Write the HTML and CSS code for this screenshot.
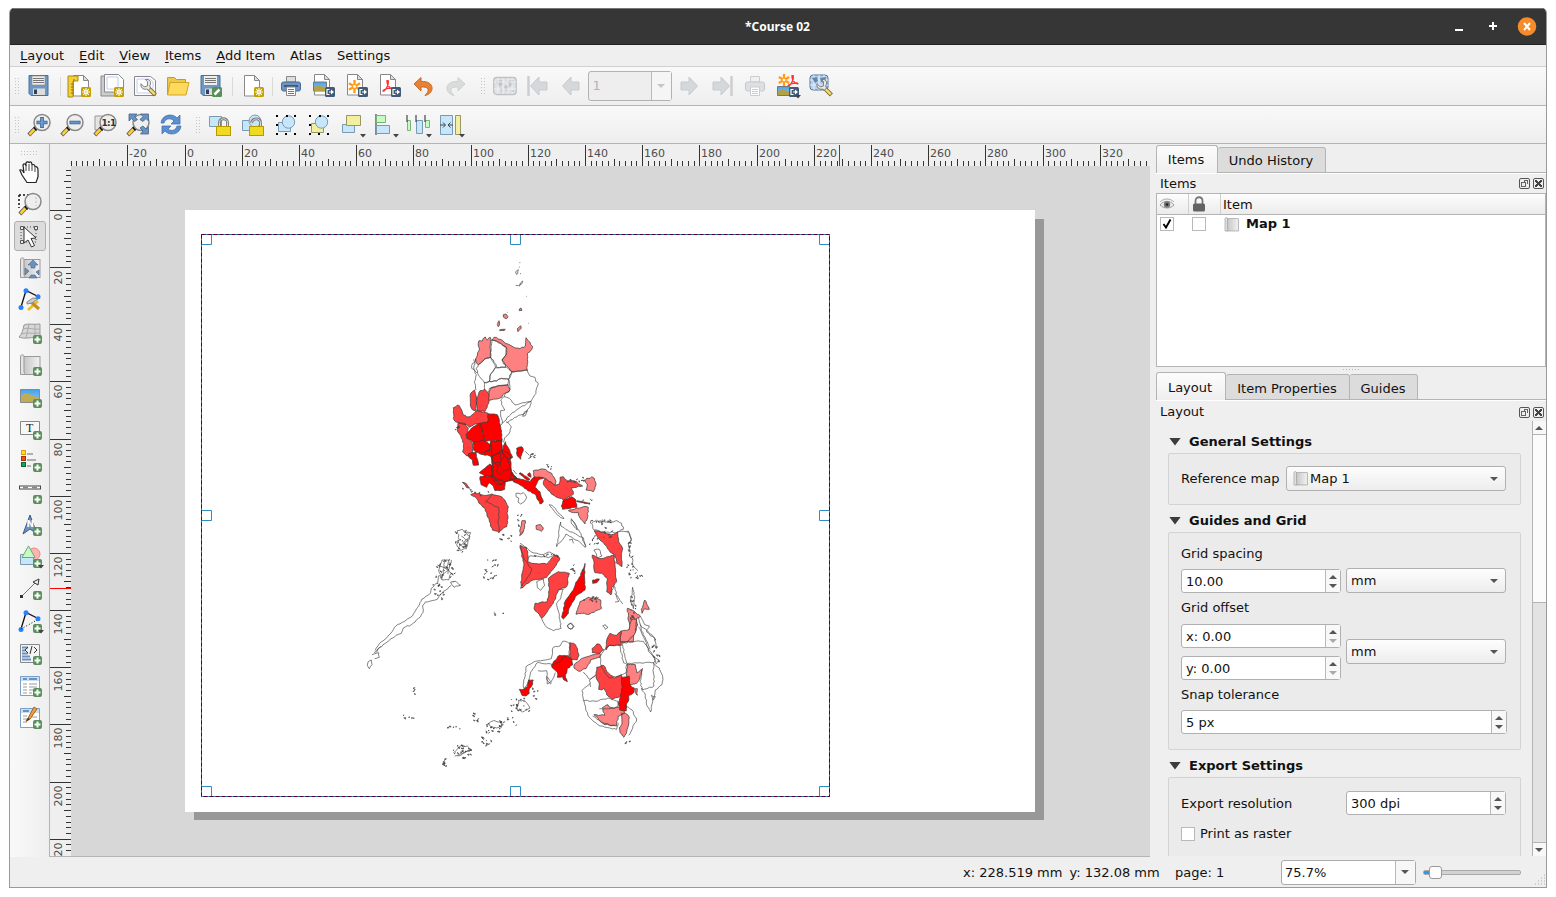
FILE: index.html
```html
<!DOCTYPE html>
<html lang="en">
<head>
<meta charset="utf-8">
<title>*Course 02</title>
<link rel="stylesheet" href="styles.css">
</head>
<body>
<svg class="defs" width="0" height="0">
  <defs>
    <linearGradient id="gray" x1="0" x2="1"><stop offset="0" stop-color="#c4c4c4"/><stop offset="1" stop-color="#f2f2f2"/></linearGradient>
    <linearGradient id="sky" x1="0" y1="0" x2="0" y2="1"><stop offset="0" stop-color="#46a2ea"/><stop offset="1" stop-color="#8fc8f2"/></linearGradient>
    <symbol id="plus" viewBox="0 0 9 9"><rect width="9" height="9" rx="2" fill="#5a8f5a"/><path d="M4.500 1.500v6M1.500 4.500h6" stroke="#fff" stroke-width="2"/></symbol>
    <symbol id="star" viewBox="0 0 10 10"><rect width="10" height="10" rx="1.500" fill="#c4a000"/><path d="M5 1v8M1 5h8M2.200 2.200l5.600 5.600M7.800 2.200L2.200 7.800" stroke="#fff" stroke-width="1.100"/><circle cx="5" cy="5" r="1.200" fill="#c4a000" stroke="#fff"/></symbol>
    <symbol id="export" viewBox="0 0 10 10"><rect width="10" height="10" rx="1.500" fill="#415a75"/><path d="M4.500 2.500H2v5h2.500M4 5h3" stroke="#fff" fill="none" stroke-width="1.200"/><path d="M6 2.500L9 5 6 7.500z" fill="#fff"/></symbol>
    <symbol id="page" viewBox="0 0 24 24"><path d="M4.500 1.500h10l5 5v15.500h-15z" fill="#fff" stroke="#888"/><path d="M14.500 1.500v5h5z" fill="#ddd" stroke="#888"/></symbol>
    <symbol id="burst" viewBox="0 0 12 12"><path d="M6 0v12M.8 3l10.400 6M.8 9l10.400-6" stroke="#ff9c16" stroke-width="2.200"/><circle cx="6" cy="6" r="1.300" fill="#fff"/></symbol>
    <symbol id="acro" viewBox="0 0 12 12"><path d="M1 11c0-2 10-4 10-2.500S5 7 5 1.500 7 1 6 4.500 2 12 1 11z" fill="none" stroke="#f33" stroke-width="1.300"/></symbol>
    <symbol id="glass" viewBox="0 0 24 24"><path d="M9 14.500L1.800 22" stroke="#555" stroke-width="4"/><path d="M8 15.500L2.500 21.500" stroke="#fcce3a" stroke-width="2.600"/><path d="M7 14l3 3" stroke="#111" stroke-width="2.500"/><circle cx="15" cy="9.500" r="8" fill="#eee" stroke="#888" stroke-width="1.500"/></symbol>
    <symbol id="roll" viewBox="0 0 24 24"><rect x="5" y="3.500" width="17" height="18" fill="url(#gray)" stroke="#999"/><path d="M2.500 21.500V4c0-3 4-3 3.500 0v14c0 3 2 3.500-1 3.500z" fill="#e4e4e4" stroke="#999"/></symbol>
    <symbol id="globe" viewBox="0 0 24 24"><rect x=".7" y="3.500" width="22.500" height="17" rx="3" fill="#dfe2e5" stroke="#bfc2c5" stroke-width="1.300"/><path d="M3 7l6-1 1 4-3 3-3-3zM7 13l3 2-2 4zM12 7l9-1-2 6-3 1-1-4zM12 11l4 1-2 6-3-4zM18 16h3v2h-3z" fill="#c2c5c8"/><path d="M5 4v16M10 4v16M15 4v16M19 4v16M1 8h22M1 15h22" stroke="#f2f2f2" stroke-width=".8"/></symbol>
    <symbol id="arrow" viewBox="0 0 24 24"><path d="M3.500 12L12 3v5h8v8h-8v5z" fill="#d5d8db" stroke="#c8cbce"/></symbol>
    <symbol id="shackle" viewBox="0 0 15 19"><path d="M3.500 10V5.500c0-5 8-5 8 0V10" fill="none" stroke="#777" stroke-width="2.800"/><path d="M3.500 10V5.500c0-5 8-5 8 0V10" fill="none" stroke="#ddd"/><rect x=".5" y="9.500" width="14" height="9" fill="#f0da1e" stroke="#b59b00"/></symbol>
    <symbol id="unlocked" viewBox="0 0 15 19"><path d="M2.500 6C3 1 11.500 0 11.500 6V10" fill="none" stroke="#777" stroke-width="2.800"/><path d="M2.500 6C3 1 11.500 0 11.500 6V10" fill="none" stroke="#ddd"/><rect x=".5" y="9.500" width="14" height="9" fill="#f0da1e" stroke="#b59b00"/></symbol>
    <symbol id="nodes" viewBox="0 0 24 24"><path d="M3 19L8 2.500 20 8.500" stroke="#111" stroke-width="1.300" fill="none"/><circle cx="3" cy="19.500" r="2.500" fill="#2b80ff"/><circle cx="8" cy="2.800" r="2.500" fill="#2b80ff"/><circle cx="20" cy="8.700" r="2.500" fill="#2b80ff"/></symbol>
    <symbol id="handles" viewBox="0 0 24 24"><path d="M2 2h2v2H2zM12 2h2v2h-2zM20 2h2v2h-2zM2 11h2v2H2zM20 20h2v2h-2zM11 20h2v2h-2zM2 20h2v2H2z" fill="#000"/></symbol>
    <symbol id="drop" viewBox="0 0 6 4"><path d="M0 0h6L3 3.500z" fill="#444"/></symbol>
    <symbol id="wrench" viewBox="0 0 16 16"><path d="M8 8l6.500 6.500" stroke="#7d6b2a" stroke-width="4"/><path d="M9 9l5 5" stroke="#f6dc77" stroke-width="2.200"/><path d="M1 4l3 3 3-1V2L5 0c5-1 6 4 4 6l1 2-2 2-2-1C3 10 0 7 1 4z" fill="#e8e8e8" stroke="#777" stroke-width=".9"/></symbol>
  </defs>
</svg>

<div class="window">
  <header class="titlebar">
    <span class="title">*Course 02</span>
    <span class="winbtns">
      <svg width="10" height="12"><path d="M1 8h8v2H1z" fill="#fff"/></svg>
      <svg width="10" height="12"><path d="M1 5h8M5 1v8" stroke="#fff" stroke-width="2"/></svg>
      <svg width="20" height="20"><circle cx="10" cy="9.500" r="9.300" fill="#f68b2c"/><path d="M7 6l6 7M13 6l-6 7" stroke="#fff" stroke-width="2"/></svg>
    </span>
  </header>
  <nav class="menubar"><span><u>L</u>ayout</span><span><u>E</u>dit</span><span><u>V</u>iew</span><span><u>I</u>tems</span><span><u>A</u>dd Item</span><span>Atlas</span><span>Settings</span></nav>

  <div class="toolbar">
    <i class="grip"></i>
    <b class="tool"><svg viewBox="0 0 24 24"><path d="M2 1.500h19v20H4l-2-2z" fill="#6d97c4" stroke="#4c7097"/><path d="M5 2h13v9H5z" fill="#eee" stroke="#888" stroke-width=".6"/><path d="M6 4.500h11M6 6.500h11M6 8.500h11" stroke="#777"/><path d="M6 14.500h12V21H6z" fill="#ddd"/><path d="M7 15.500h3V20H7z" fill="#333f55"/></svg></b>
    <i class="sep a"></i>
    <b class="tool"><svg viewBox="0 0 24 24"><use href="#page" x="2" width="24" height="24"/><path d="M1 2h10v5H6v16H1z" fill="#f5cf35" stroke="#a98b14"/><path d="M4 10h2M4 13h2M4 16h2M4 19h2M7 5v2" stroke="#8b7000"/><use href="#star" x="14" y="13" width="10" height="10"/></svg></b>
    <b class="tool"><svg viewBox="0 0 24 24"><path d="M1 2h17v20H1z" fill="#ccc" stroke="#888"/><path d="M4.500.5h14l5 5V18h-19z" fill="#fff" stroke="#888"/><path d="M7 3h11v12H7z" fill="none" stroke="#bcd0f5"/><use href="#star" x="14" y="13" width="10" height="10"/></svg></b>
    <b class="tool"><svg viewBox="0 0 24 24"><path d="M1.500 2.500h16l5 4V21.500h-21z" fill="#fff" stroke="#888"/><path d="M4 5h13l3 3v11H4z" fill="none" stroke="#bcd0f5"/><use href="#wrench" x="7" y="5" width="17" height="18"/></svg></b>
    <b class="tool"><svg viewBox="0 0 24 24"><path d="M1.500 21V3.500h7l2 2h9v4" fill="#eec84a" stroke="#c79d21"/><path d="M4 8.500h19L20 21H1.500z" fill="#fdd95c" stroke="#cfa52a"/></svg></b>
    <b class="tool"><svg viewBox="0 0 24 24"><path d="M2 1.500h19v20H4l-2-2z" fill="#6d97c4" stroke="#4c7097"/><path d="M5 2h13v9H5z" fill="#eee"/><path d="M6 4.500h11M6 6.500h11M6 8.500h11" stroke="#777"/><path d="M6 14.500h12V21H6z" fill="#ddd"/><path d="M7 15.500h3V20H7z" fill="#333f55"/><rect x="13" y="13" width="10" height="10" rx="1.500" fill="#5a8f5a"/><path d="M15.500 20.500l5-5" stroke="#fff" stroke-width="2.500"/></svg></b>
    <i class="sep b"></i>
    <b class="tool"><svg viewBox="0 0 24 24"><use href="#page" x="-1" y="0" width="24" height="24"/><use href="#star" x="13" y="13" width="10" height="10"/></svg></b>
    <i class="sep c"></i>
    <b class="tool"><svg viewBox="0 0 24 24"><path d="M7.500 2.500h9V8h-9z" fill="#dedede" stroke="#888"/><rect x="2.500" y="8" width="19" height="9" rx="2" fill="#6e94bf" stroke="#466b96"/><path d="M5 11h14v2H5z" fill="#395a80"/><path d="M7.500 13h9v8.500h-9z" fill="#fff" stroke="#888"/><path d="M9 15.500h6M9 17.500h6M9 19.500h6" stroke="#777"/></svg></b>
    <b class="tool"><svg viewBox="0 0 24 24"><use href="#page" x="-2" y="-1" width="24" height="24"/><path d="M1.500 8h13v9h-13z" fill="url(#sky)" stroke="#777"/><path d="M2 13l5-2 7 3v3H2z" fill="#b3a147"/><use href="#export" x="13" y="13" width="10" height="10"/></svg></b>
    <b class="tool"><svg viewBox="0 0 24 24"><use href="#page" x="-2" y="-1" width="24" height="24"/><use href="#burst" x="3" y="6" width="13" height="13"/><use href="#export" x="13" y="13" width="10" height="10"/></svg></b>
    <b class="tool"><svg viewBox="0 0 24 24"><use href="#page" x="-2" y="-1" width="24" height="24"/><use href="#acro" x="4" y="6" width="12" height="12"/><use href="#export" x="13" y="13" width="10" height="10"/></svg></b>
    <b class="tool"><svg viewBox="0 0 24 24"><path d="M3 10L10 3.500v4c14-1 14 12 4 14 6-6 3-9-4-8.500V17z" fill="#e78135" stroke="#c96a26"/></svg></b>
    <b class="tool"><svg viewBox="0 0 24 24"><path d="M21 10L14 3.500v4c-14-1-14 12-4 14-6-6-3-9 4-8.500V17z" fill="#dadcdb" stroke="#cfd1d0"/></svg></b>
    <i class="grip mid"></i>
    <b class="tool"><svg viewBox="0 0 24 24"><use href="#globe" width="24" height="24"/></svg></b>
    <b class="tool"><svg viewBox="0 0 24 24"><path d="M2.500 2v20" stroke="#cbced1" stroke-width="2.500"/><use href="#arrow" x="1" width="24" height="24"/></svg></b>
    <b class="tool"><svg viewBox="0 0 24 24"><use href="#arrow" width="24" height="24"/></svg></b>
    <span class="pagebox"><em>1</em><s></s></span>
    <b class="tool flip"><svg viewBox="0 0 24 24"><use href="#arrow" width="24" height="24"/></svg></b>
    <b class="tool flip"><svg viewBox="0 0 24 24"><path d="M2.500 2v20" stroke="#cbced1" stroke-width="2.500"/><use href="#arrow" x="1" width="24" height="24"/></svg></b>
    <b class="tool"><svg viewBox="0 0 24 24"><path d="M7.500 2.500h9V8h-9z" fill="#f1f1f1" stroke="#ccc"/><rect x="2.500" y="8" width="19" height="9" rx="2" fill="#dde0e3" stroke="#c6c9cc"/><path d="M7.500 13h9v8.500h-9z" fill="#fff" stroke="#ccc"/><path d="M9 15.500h6M9 17.500h6M9 19.500h6" stroke="#ccc"/></svg></b>
    <b class="tool"><svg viewBox="0 0 24 24"><use href="#burst" x="2" y="0" width="12" height="12"/><use href="#acro" x="11" y="1" width="12" height="12"/><path d="M1.500 12.500h12v9h-12z" fill="url(#sky)" stroke="#777"/><path d="M2 17l5-2 6 3v3H2z" fill="#b3a147"/><use href="#export" x="13" y="13" width="10" height="10"/><use href="#drop" x="19" y="21" width="6" height="4"/></svg></b>
    <b class="tool"><svg viewBox="0 0 24 24"><rect x="1" y="1" width="18" height="15" rx="3" fill="#b7cfe9" stroke="#54779e"/><path d="M5 1v15M10 1v15M15 1v15M1 6h18M1 11h18" stroke="#e3eefa"/><path d="M3 4l5-1 1 4-3 2zM11 4l6-1-1 6-4-1z" fill="#6387ad"/><use href="#wrench" x="7" y="5" width="17" height="18"/></svg></b>
  </div>

  <div class="toolbar second">
    <i class="grip"></i>
    <b class="tool"><svg viewBox="0 0 24 24"><use href="#glass" width="24" height="24"/><path d="M15 4v11M9.500 9.500h11" stroke="#355f8e" stroke-width="3.600"/><path d="M15 4.700v9.600M10.200 9.500h9.600" stroke="#6a9bd0" stroke-width="2"/></svg></b>
    <b class="tool"><svg viewBox="0 0 24 24"><use href="#glass" width="24" height="24"/><path d="M9.500 9.500h11" stroke="#355f8e" stroke-width="3.600"/><path d="M10.200 9.500h9.600" stroke="#6a9bd0" stroke-width="2"/></svg></b>
    <b class="tool"><svg viewBox="0 0 24 24"><path d="M2 3h8v14H2z" fill="#e4e4e4" stroke="#999"/><use href="#glass" width="24" height="24"/><text x="8.500" y="13" class="ratio">1:1</text></svg></b>
    <b class="tool"><svg viewBox="0 0 24 24"><use href="#glass" width="24" height="24"/><g fill="#6a92c0" stroke="#43658c" stroke-width=".8"><path d="M3 1h8L8.500 3.500l3 3-3 2-3-3L3 8zM22.500 1h-8L17 3.500l-3 3 3 2 3-3L22.500 8zM22.500 21h-8l2.500-3-3-3 3-2 3 3 2.500-2z"/></g></svg></b>
    <b class="tool"><svg viewBox="0 0 24 24"><g fill="#5a8fd0" stroke="#3d6ca5" stroke-width=".7"><path d="M2 10C3 1 14 0 18 5l3-3v9h-9l3-3C11 4 6 6 5 10z"/><path d="M22 13c-1 9-12 10-16 5l-3 3v-8h9l-3 3c4 3 8 1 9-3z"/></g></svg></b>
    <i class="grip mid"></i>
    <b class="tool"><svg viewBox="0 0 24 24"><path d="M1.500 3.500h12v10h-12z" fill="#c8e6fa" stroke="#789bb5"/><use href="#shackle" x="8" y="4" width="15" height="19"/></svg></b>
    <b class="tool"><svg viewBox="0 0 24 24"><path d="M1.500 7.500h10v10h-10z" fill="#c8e6fa" stroke="#789bb5"/><circle cx="14" cy="8" r="6" fill="#c8e6fa" stroke="#789bb5"/><use href="#unlocked" x="8" y="4" width="15" height="19"/></svg></b>
    <b class="tool"><svg viewBox="0 0 24 24"><path d="M4.500 9.500h12v9h-12z" fill="#c8e6fa" stroke="#789bb5"/><circle cx="14.500" cy="9" r="6.200" fill="#c8e6fa" stroke="#789bb5"/><use href="#handles" width="24" height="24"/></svg></b>
    <b class="tool"><svg viewBox="0 0 24 24"><path d="M4.500 10.500h12v9h-12z" fill="#f2f0a0" stroke="#999766"/><circle cx="14.500" cy="9" r="6.200" fill="#c8e6fa" stroke="#789bb5"/><use href="#handles" width="24" height="24"/></svg></b>
    <b class="tool"><svg viewBox="0 0 24 24"><path d="M2.500 11.500h12v8h-12z" fill="#c8e6fa" stroke="#789bb5"/><path d="M6.500 2.500h14v10h-14z" fill="#f2f0a0" stroke="#999766"/><use href="#drop" x="20" y="21" width="6" height="4"/></svg></b>
    <b class="tool"><svg viewBox="0 0 24 24"><path d="M3 1v21" stroke="#222"/><path d="M3.500 2.500h9v7h-9z" fill="#c6fac6" stroke="#76b576"/><path d="M3.500 12.500h13v8h-13z" fill="#c8e6fa" stroke="#789bb5"/><use href="#drop" x="20" y="21" width="6" height="4"/></svg></b>
    <b class="tool"><svg viewBox="0 0 24 24"><path d="M1.500 7.500h3v10h-3z" fill="#c6fac6" stroke="#76b576"/><path d="M10.500 7.500h6v13h-6z" fill="#c8e6fa" stroke="#789bb5"/><path d="M19.500 7.500h4v7h-4z" fill="#c6fac6" stroke="#76b576"/><path d="M1 2v7M10 2v7M19 2v7" stroke="#222"/><use href="#drop" x="20" y="21" width="6" height="4"/></svg></b>
    <b class="tool"><svg viewBox="0 0 24 24"><path d="M1.500 2.500h12v19h-12z" fill="#c8e6fa" stroke="#789bb5"/><path d="M16.500 2.500h5v19h-5z" fill="#f2f0a0" stroke="#999766"/><path d="M1 12h5M4 9.500L6.500 12 4 14.500M14 12H9M11.500 9.500L9 12l2.500 2.500" stroke="#444" fill="none"/><use href="#drop" x="20" y="21" width="6" height="4"/></svg></b>
  </div>

  <main class="workspace">
    <aside class="toolbox">
      <i class="hgrip"></i>
      <b class="tool"><svg viewBox="0 0 24 24"><path d="M9 22.500L4 15 1.800 10c2-1 3.200 1 4.200 3L5 5c1-2 3-1 3 1V3c1-2 3-1 3 0 1-2 3-1 3 2 2-1 3 0 3 2 2-1 3 1 3 3v7l-2 5.500z" fill="#fff" stroke="#222" stroke-width="1.200"/><path d="M8 5v6M11 4v7M14 6v5M17 8v4" stroke="#444"/></svg></b>
      <b class="tool"><svg viewBox="0 0 24 24"><path d="M1 3h12M1 3v13" stroke="#111" stroke-width="1.500" stroke-dasharray="2 2"/><use href="#glass" width="24" height="24"/><path d="M18 5v9" stroke="#bbb" stroke-dasharray="2 2"/></svg></b>
      <b class="tool on"><svg viewBox="0 0 24 24"><path d="M3 3h15v15H3z" fill="none" stroke="#444" stroke-dasharray="1 2"/><path d="M2.500 2.500h3v3h-3zM16.500 2.500h3v3h-3zM2.500 16.500h3v3h-3z" fill="#eee" stroke="#555"/><path d="M6 3l12 11-5 .5 3.500 7-3 1.500-3.500-7L6 19z" fill="#fff" stroke="#333"/></svg></b>
      <b class="tool"><svg viewBox="0 0 24 24"><use href="#roll" width="24" height="24"/><path d="M15 4l5 5h-3v3h-4V9h-3zM7 12l4 3-4 4zM21 14l-3 2 3 3zM13 19h4l2 3h-8z" fill="#6a92c0" stroke="#43658c" stroke-width=".6"/></svg></b>
      <b class="tool"><svg viewBox="0 0 24 24"><use href="#nodes" width="24" height="24"/><path d="M10 22l10-9" stroke="#e8c22a" stroke-width="3"/><path d="M21 21l-8-7" stroke="#c98a1e" stroke-width="3"/><path d="M9 14l6-4 5 1-6 4-5 1z" fill="#ccc" stroke="#888"/></svg></b>
      <b class="tool"><svg viewBox="0 0 24 24"><path d="M6 4c4-2 10 0 16-1v14c-8-2-14 2-21-1C4 13 5 9 6 4z" fill="#d7d7d7" stroke="#999"/><path d="M5 8c5-2 11 1 17 0M3 13c6-2 12 0 19-1M11 3L8 17M17 3v14" stroke="#aaa" fill="none"/><use href="#plus" x="15" y="14" width="9" height="9"/></svg></b>
      <b class="tool"><svg viewBox="0 0 24 24"><use href="#roll" width="24" height="24"/><use href="#plus" x="15" y="14" width="9" height="9"/></svg></b>
      <b class="tool"><svg viewBox="0 0 24 24"><path d="M2.500 4.500h19v13h-19z" fill="url(#sky)" stroke="#888"/><path d="M3 11l5-3 13 5v4H3z" fill="#c0ad51"/><use href="#plus" x="15" y="14" width="9" height="9"/></svg></b>
      <b class="tool"><svg viewBox="0 0 24 24"><path d="M2.500 4.500h19v13h-19z" fill="#f7f7f7" stroke="#888"/><text x="8" y="15" class="tee">T</text><use href="#plus" x="15" y="14" width="9" height="9"/></svg></b>
      <b class="tool"><svg viewBox="0 0 24 24"><rect x="3.500" y="1.500" width="4" height="4" fill="#fcdf27" stroke="#e19a00"/><rect x="3.500" y="7.500" width="4" height="4" fill="#ff4911" stroke="#a6320b"/><rect x="3.500" y="13.500" width="4" height="4" fill="#17a455" stroke="#066b33"/><path d="M9 5h6M9 11h9M9 17h4" stroke="#999" stroke-width="1.500"/><use href="#plus" x="15" y="14" width="9" height="9"/></svg></b>
      <b class="tool"><svg viewBox="0 0 24 24"><rect x="1.500" y="5" width="21" height="3" fill="#fff" stroke="#444"/><path d="M5 6.500h5M14 6.500h5" stroke="#888" stroke-width="2"/><use href="#plus" x="15" y="14" width="9" height="9"/></svg></b>
      <b class="tool"><svg viewBox="0 0 24 24"><path d="M12 2l7 19-7-5-7 5z" fill="#6f94bd" stroke="#365b86"/><text x="8.500" y="14" class="en">N</text><use href="#plus" x="15" y="14" width="9" height="9"/></svg></b>
      <b class="tool"><svg viewBox="0 0 24 24"><circle cx="16" cy="9" r="6" fill="#ffb3b3" stroke="#e38a8a"/><path d="M2.500 9.500h13v10h-13z" fill="#c8e6fa" stroke="#789bb5"/><path d="M10.500 1l6.500 11.500H4z" fill="#c6fac6" stroke="#70a870"/><use href="#plus" x="15" y="14" width="9" height="9"/><use href="#drop" x="20" y="20" width="6" height="4"/></svg></b>
      <b class="tool"><svg viewBox="0 0 24 24"><path d="M3 20L19 4" stroke="#777"/><path d="M15 5l6-3-1 6z" fill="#eee" stroke="#333"/><path d="M2 18h3v3H2z" fill="#333"/><use href="#plus" x="15" y="14" width="9" height="9"/></svg></b>
      <b class="tool"><svg viewBox="0 0 24 24"><use href="#nodes" width="24" height="24"/><path d="M3 19l16-9" stroke="#111" stroke-dasharray="1 2"/><use href="#plus" x="15" y="14" width="9" height="9"/><use href="#drop" x="20" y="20" width="6" height="4"/></svg></b>
      <b class="tool"><svg viewBox="0 0 24 24"><path d="M2.500 2.500h19v18h-19z" fill="#f3f3f3" stroke="#888"/><path d="M4 5.500h6M4 8.500h3M4 11.500h6M4 14.500h8M4 17.500h9" stroke="#6a92c0" stroke-width="1.800"/><path d="M10 5L7 8l3 3M16 5l3 3-3 3M14 4l-2 8" fill="none" stroke="#333"/><use href="#plus" x="15" y="14" width="9" height="9"/></svg></b>
      <b class="tool"><svg viewBox="0 0 24 24"><path d="M2.500 2.500h19v19h-19z" fill="#fff" stroke="#7ba0c9"/><path d="M3 3h18v4H3z" fill="#c8def2"/><path d="M5 5h4M11 5h8" stroke="#6a92c0" stroke-width="2"/><path d="M5 10h4M11 10h8M5 13h4M11 13h8M5 16h4M11 16h5M5 19h4M11 19h3" stroke="#999"/><use href="#plus" x="15" y="14" width="9" height="9"/></svg></b>
      <b class="tool"><svg viewBox="0 0 24 24"><path d="M2.500 2.500h19v19h-19z" fill="#fff" stroke="#7ba0c9"/><path d="M3 3h18v4H3z" fill="#c8def2"/><path d="M5 5h6" stroke="#6a92c0" stroke-width="2"/><path d="M5 10h4M5 13h4M5 16h4M13 11h6" stroke="#999"/><path d="M10 12L16 1l3 2-7 10-4 2z" fill="#ea9d44" stroke="#a96518"/><path d="M10 12l2 1-4 3z" fill="#333"/><use href="#plus" x="15" y="14" width="9" height="9"/></svg></b>
    </aside>

    <section class="canvas">
      <svg id="rulers" class="rulers" width="1100" height="713" viewBox="50 144 1100 713">
        <path d="M50 144h1100v22H71v691H50z" fill="#efefef"/>
        <path d="M71 166h1079v690H71z" fill="#d7d7d7"/>
        <path d="M50 856.500h1100" stroke="#b4b4b4"/>
        <path d="M194 219h850v601H194z" fill="#989898"/>
        <path d="M185 210h850v602H185z" fill="#fff"/>
        <g class="land" transform="translate(430 240) scale(.33333)">
          <path class="l" d="M147 302l10 1 3-8 6-4 6 9 9-8 1 60-14 3-10 9-13 10-5-4-3-14 5-10 6-16-3-12zM185 300l7-8 18 6 12 8 18 9 15 9 15 2 16-8 1-10 1-15 6 8 6 6 8 13-8 15-8 5 0 18 0 33-46 4-14-15-8-8-8-12 12-15 1-23-12-8-17-10zM183 443l22-5 29-4 6 14-4 8-16 6-5 10-10 4-29 5 0-19zM220 224l8-2 6 8-4 6-10-5zM268 207l5-3 3 7-8 1zM205 245l2-3 2 8-4 10-3-6zM208 270l8-2 10 0-4 4-12 0zM262 266l10-9 2 8-10 10z"/>
          <path class="n" d="M185 300l15 4 29 18-1 23-12 15 12 22-28 0-10-22-8-8zM145 374l23-19 14-3 10 18 4 13-14 19-4 22-15 4-18-23-7-20zM196 383l32-3 18 15-10 23-21-3-15 8-22 1 4-22zM163 428l37-5 15-8 21 3-2 16-34 4-22 7-2 11-13-1zM246 395l46-4 8 17 15 4 2 12 8 8-4 10-3 18-15 24-18 4-30 7-17-20-16-5 18-22-4-30zM137 356l-3 12-6 2-3 15 7 4 3 11 4 4-6 21 5 25M131 358l4 14-4 12 10 15M222 470l-10 10 3 14 10 16-13 2 0 16 5 22M212 556l35-38 56-34-4 18-14 18-20 6-24 14-9 8-4-2M232 545l12 16-6 18-10 10-8 18M284 515l8-3-6 15-8 2zM257 95l8-6-2 12-4 2zM268 80v3M268 68h3M257 136l12 2 2-9 7-6-2 8-8 4M289 169h2M294 250h2M231 217h2M270 101h3"/>
          <path class="m" d="M122 460l12-10 6 25-3 37-9-2-7-15zM150 452l15-4 11 12 0 30-11 24-25-2 0-37zM70 503l8-3 4-5 6 2 7 13 5 15 10 6 10-1 17-16 28 2 10 4-1 25-14 10-25-3-17 10-6-7-27-7-9-3-6-10zM85 548l20 2 10 15-7 25 17 15 5 35-20 8-12-13 3-10-3-25-15-25z"/>
          <path class="h" d="M174 523l18-1 10 2 6 16 4 20 4 25-1 20-25-3-26 2-6-29-8-25 24-5zM150 550l8 25 6 27-34 6-20-13-1-12 15-18 11-7z"/>
        </g>
        <g class="land" transform="translate(430 400) scale(.33333)">
          <path class="h" d="M182 125l34-3 0 28 24 15 5 50 15 20-20 5-35 15-20-20 1-65zM130 128l30-8 22 15-2 15-30 12-20-12zM182 125l33-3 1 28-11 10-20 10-33-8 30-12zM226 125l10 20 12 27-8 6-15-8-9-20zM115 162l23-6 8 39-16 1-2-16-13-10zM185 170l30-15 17 23 10 27 3 20 15 10-50 17-20-22-4-30zM148 218l12-10 20-16 10 8 0 30-25-2zM150 230l35-4 20 12 21 7-2 23-14 4-15 0-5-14-12-10-8 14-17-8zM245 218l15 17 40 10 18-20 27 7-20 8-10 22 15 13 4 16 6 14-10 7-7-12-5-15-28-17-28-18-22-12zM260 145l15-5 5 10-4 10-4 18-10-10zM270 218l30 20-4 3-28-19zM293 222l6-4 4 14-9-5zM400 300l25-10 13 10 2 22-42 6-4-10zM442 302l38 7-2 3-38-7z"/>
          <path class="n" d="M185 170l8 18 10 12 8-10 10-20M203 200l-4 14 12 10 12-12 20-4M190 190l20-4M212 160l0 40M182 170l10 12M190 240l30 0"/>
          <path class="m" d="M122 284l12-4 36 6 15-4 30 8 20 30-4 20 3 15-4 25-10 5-13 13-4-4-16-4-22-65-18-15-7-15zM345 235l30 20 13-3 2-20 10-2 12 12 28 3 18 13-33 5 5 20-30 17-20-8-25-20-15-20zM97 247l12 4 10 14-10-3z"/>
          <path class="l" d="M310 212l8-2 22-3 25 13 13 25-3 10-30-20-33-5zM470 235l10 0 5-5 8 5 5 15-3 12-5 13-22-5 4-16-7-9zM415 332l45-12 15 2-3 33-7 17-17-22-3-12-22-2zM276 362l10 0-2 20-8 20-7 5 2-22zM318 377l14-3 8 10-6 10-15-6z"/>
          <path class="n" d="M187 284l-20 21 39 18v75M258 280l14 2 8-4 10 14-8 14-10 6-8-6 2-12-8-4zM485 370l15-10 4 4 46 2 8-4 17 8 5 18-20 10-40-3-28-5zM358 314l8 2 22 26 14 14-10-3-18-18zM424 356l14 20 4 14-8-8-10-12zM392 366l-12 74 28-38 36 20 22 20-5-28-54-26-14-10zM590 395l10 8 4 18-8 8M250 210l10 12M286 154l12 12"/>
        </g>
        <g class="land" transform="translate(350 500) scale(.33333)">
          <path class="m" d="M733 92l27 5 10 4 20 2 13-8 3 30 12 20-4 20 2 35-16-10-5-25-14-8-16-22-20-20zM727 165l8 3 10 7 15 0 32-10 5 50 3 30-15 17-2 23-13-10 2-40-17-15-20-2zM510 136l20 7 3 20 0 22 12 5 45 2 20-22 10-5 10 10-15 25-25 32-40 8-38 25 3-40 7-30-8-40zM595 235l30-20 33 5-8 40-25 10-15 40-35 45-23-30 3-15 37-5 6-35z"/>
          <path class="h" d="M705 190l-2 35 2 45-15 10-14 10-16 30-5 20-15 17-5-5 6-20 4-27 25-35 12-28 10-15zM728 240l20-3-8 11-12 2z"/>
          <path class="l" d="M690 305l25-13 20 2 17 6 3 25-35 17-25-2-17 3 7-23zM832 325l20 8 20 16-14 8 5 18-10 25-3 25-36 2 3-28 15 0 8-20-4-16zM884 300l8 16 6 12-14-2-8 14-2-12z"/>
          <path class="n" d="M806 95l29-2 4 14 6 11-10 12 4 20 0 20 8 4 3 26 14 12M510 130l24 18 10 8 30 8 24-8 26 14M533 185l4-16 20-2 38 6 20-8M512 138l10 38 24 34-30 48M625 270l15-2-10 30-10 12 4 20 6 30 3 25-23 7-20-10-15-27M560 245l20-8 4 20-12 14-10-8zM732 150l16-2 8 20-12 6zM780 278l12-20 10 30 16 24M795 280l12 24-12 2M848 262l6 30-4 34-8-20zM872 350l12 24 14 4-8 18 24 20 4 22M866 352l8 40 18 34 8 22M652 377l12-8 8 10-6 8-10-2zM758 378l8-4 8 8-8 6zM666 60l20 30 22 50M657 120l10-2 4 12"/>
          <path class="n" d="M268 225l-4 20-20 20-6 18-22 14-8 18-12 18-8 14-20 14-24 12-14 16-18 22-24 20-12 20M304 256l-24 18-10 10-8 14-36 8-8 10 2 14-8 20-28 24-24 10-6 16-20 10-28 20-22 16-6 12M322 92l14-4 8 10 18 0-4 20-14 10 4 16-16 8-12-18 8-14zM334 108l20 14-6 26M342 92l18 18-34 30M320 124l24 18M276 180l20 0-6 22 14 18-8 20-20 0-10-30zM262 195l34 14-24 20M284 178l-8 60M304 180l-10 42M302 246l16-2 14 12-20 6z"/>
        </g>
        <g class="land" transform="translate(350 620) scale(.33333)">
          <path class="h" d="M604 136l25-30 30 4 6 10 3 15-16 10-2 14-4 6 6 20-10-5-4-10-16 2 0-16-15-12zM508 208l14 0 10-8 4-20 14 0-2 12-10 14 0 14-10 8-12-2z"/>
          <path class="m" d="M659 68l12 2 8 10 8 26-6 14-16 0-6-14zM726 86l14-14 8 0 13 18-12 10-22-2zM770 60l10-20 20 6 14-14 0 44-36 0-10 14zM740 142l20-6 16 24 18 14 20-10 4 18 4 38-16 12-20 6-16-14-8-20-6 6-10-2 2-16-10-20z"/>
          <path class="l" d="M672 136l22-20 30-10 26-6 0 12-28 8-14 26-22 8-14-10zM814 34l24-6 6-28 16-2-2 24-4 20-20 22-22 2zM832 132l24 2 4 24 16-10-6 26-10 16-24 6-6-28zM758 262l16-8 8 8 38 2 4 14-20 12-4 28-40-6-28-28 32 2zM814 280l12 0 12 12-2 20-6 24-8 16-12-14-2-14 8-12zM856 206l6 0 0 20-6-8z"/>
          <path class="h" d="M815 172l22-4 4 28 12 8-2 14-14 8-2 18-6 8 0 20-20-2-4-22 10-32z"/>
          <path class="n" d="M520 200l8-60 14-8 14-8 30-4 18-4 6-34 20-4 8-14 14 2 8 6-2 34-18 4-10 16-22 8-46-6-20 28-6 30-14 20zM564 152l26 0 0 26 12 14 14-34M590 170l12 14-10 8zM750 110l14-22 14-12 32 0 10 52 10 6-2 24-24 10-26 6-14-16-10-20zM816 70l40-6 24 0 34 52-2 12-82 2zM865 20l20 40 10 34 18 16 4 20M870 14l40 35 6 12M912 110l14 10-8 12M910 128l2 70-34 12-8-26 8-40M912 130l16 14 10 26-2 24-20 16-8 34-6 32-12-20-4-30-12-22M904 226l12 4-6 10zM720 190l-24 22 4 30 40 2 34-10 30 10 0 16-24 6-32 0M702 242l6 30 10 20 32 26 50 10 4-20M822 256l24 14 14 30-24 46M700 156l20 22 18-14M738 165l-20 16 4 20M728 288l30 20 38 10M506 240l20 4 14 20-22 12-18-10zM416 310l14-8 18 4 12 8-20 10-18-4zM310 398l22-20 20 0 12 12-30 10-20 8M322 408l38-16M652 18l10-8 8 8-8 10zM54 126l10-6 2 14-8 12-6-10zM66 104l20-6 2 14-14 4M92 80l-20 18"/>
        </g>
        <g id="islets" class="islets"></g>
        <g fill="#fff" stroke="#328ac4"><path d="M201.500 234.500h10v10h-10zM510.500 234.500h10v10h-10zM819.500 234.500h10v10h-10zM201.500 510.500h10v10h-10zM819.500 510.500h10v10h-10zM201.500 786.500h10v10h-10zM510.500 786.500h10v10h-10zM819.500 786.500h10v10h-10z"/></g>
        <g fill="none">
          <path d="M201.500 234.500h628v562h-628z" stroke="#2f86bd"/>
          <path d="M201.500 234.500h628v562h-628z" stroke="#520030" stroke-dasharray="4 2"/>
        </g>
      </svg>
    </section>

    <aside class="docks">
      <div class="tabs"><span class="tab on t1">Items</span><span class="tab t2">Undo History</span></div>
      <div class="docktitle">Items<span class="dockbtns"><i class="float"></i><i class="close"></i></span></div>
      <div class="tree">
        <div class="treehead">
          <span class="col eye"><svg width="16" height="12"><path d="M1 7c4-5 10-5 14 0-4 4-10 4-14 0z" fill="#eee" stroke="#999"/><circle cx="8" cy="6.500" r="3.200" fill="#777"/><circle cx="8" cy="6.500" r="1.300" fill="#222"/><path d="M1 4c4-4 10-4 14 0" fill="none" stroke="#aaa"/></svg></span>
          <span class="col"><svg width="14" height="16"><path d="M3.500 8V5c0-5 7-5 7 0v3" fill="none" stroke="#777" stroke-width="1.800"/><rect x="1" y="7.500" width="12" height="8" rx="1.500" fill="#636363"/></svg></span>
          <span class="name">Item</span>
        </div>
        <div class="treerow">
          <span class="check"><svg width="12" height="12"><path d="M2.500 6L5 9.500 9.500 1.500" fill="none" stroke="#000" stroke-width="1.900"/></svg></span>
          <span class="check"></span>
          <svg class="mini" viewBox="1 1 22 22"><use href="#roll" width="24" height="24"/></svg>
          <strong>Map 1</strong>
        </div>
      </div>
      <div class="splitter"><i></i></div>
      <div class="tabs lower"><span class="tab on t3">Layout</span><span class="tab t4">Item Properties</span><span class="tab t5">Guides</span></div>
      <div class="docktitle low">Layout<span class="dockbtns"><i class="float"></i><i class="close"></i></span></div>
      <div class="scroll">
        <div class="form">
          <h3 class="first">General Settings</h3>
          <div class="box general"><label>Reference map</label><span class="combo wide"><svg class="mini" viewBox="1 1 22 22"><use href="#roll" width="24" height="24"/></svg>Map 1</span></div>
          <h3>Guides and Grid</h3>
          <div class="box grid">
            <label>Grid spacing</label>
            <div class="row spacing"><span class="spin">10.00<i></i></span><span class="combo">mm</span></div>
            <label>Grid offset</label>
            <div class="row offset"><div class="stack"><span class="spin zero">x: 0.00<i></i></span><span class="spin zero">y: 0.00<i></i></span></div><span class="combo">mm</span></div>
            <label>Snap tolerance</label>
            <span class="spin full">5 px<i></i></span>
          </div>
          <h3>Export Settings</h3>
          <div class="box export">
            <div class="row"><label>Export resolution</label><span class="spin">300 dpi<i></i></span></div>
            <div class="option"><span class="check"></span>Print as raster</div>
            <div class="option"><span class="check"></span></div>
          </div>
        </div>
        <div class="scrollbar"><i class="up"></i><b></b><i class="down"></i></div>
      </div>
    </aside>
  </main>

  <footer class="status">
    <span class="coords"><span>x: 228.519 mm</span><span>y: 132.08 mm</span></span>
    <span class="pageno">page: 1</span>
    <span class="zoombox"><em>75.7%</em><s></s></span>
    <span class="slider"><i></i></span>
    <svg class="sizegrip" width="12" height="12"><path d="M1 11h1M4 11h1M7 11h1M10 11h1M4 8h1M7 8h1M10 8h1M7 5h1M10 5h1M10 2h1" stroke="#aaa"/></svg>
  </footer>
</div>
<script src="rulers.js"></script>
</body>
</html>
```
FILE: styles.css
```css
* { box-sizing: border-box; }
body { margin: 0; background: #fff; font: 13px/18px "DejaVu Sans", sans-serif; color: #111; overflow: hidden; }
.defs { position: absolute; }
.window { margin: 8px 0 0 9px; width: 1538px; height: 880px; border: 1px solid #999; border-top: 0; border-radius: 5px 5px 0 0; background: #efefef; overflow: hidden; }
.titlebar { height: 37px; background: #363636; border-top: 1px solid #777; border-bottom: 1px solid #222; display: grid; grid-template-columns: 91px 1fr 92px; align-items: center; color: #fff; font: bold 12px/18px "Noto Sans", sans-serif; }
.title { grid-column: 2; text-align: center; }
.winbtns { display: flex; align-items: center; gap: 24px; }
.winbtns svg:last-child { margin-left: -5px; }
.winbtns svg { flex: none; }
.menubar { height: 22px; border-bottom: 1px solid #d0d0d0; padding: 2px 0 0 10px; display: flex; gap: 14.900px; }
.menubar u { text-underline-offset: 2px; }

.toolbar { height: 39px; border-bottom: 1px solid #b4b4b4; background: linear-gradient(#f9f9f9, #eee); display: flex; align-items: center; }
.toolbar.second { height: 38px; }
.tool { flex: none; width: 33px; height: 32px; display: flex; align-items: center; justify-content: center; }
.tool svg { width: 24px; height: 24px; overflow: visible; }
.flip svg { transform: scaleX(-1); }
.grip { flex: none; width: 12.500px; height: 18px; background-image: linear-gradient(#c4c4c4 1px, transparent 1px), linear-gradient(#c4c4c4 1px, transparent 1px); background-position: 5px 1px, 8px 1px; background-size: 1px 3px; background-repeat: repeat-y; }
.grip.mid { width: 16px; background-position: 8px 1px, 11px 1px; }
.hgrip { width: 17px; height: 5px; background: conic-gradient(from 0deg at 1px 1px, transparent 75%, #c0c0c0 0) 0 0 / 3px 3px; }
.sep { flex: none; height: 19px; border-left: 1px solid #d9d9d9; }
.sep.a { width: 3px; margin-left: 4px; }
.sep.b { width: 5px; margin-left: 4px; }
.sep.c { width: 3px; margin-left: 2px; }
.pagebox { flex: none; display: flex; width: 84px; height: 30px; margin: 0 1px 0 0; border: 1px solid #b3b3b3; border-radius: 3px; color: #b4b4b4; background: #eee; }
.pagebox em { flex: 1; font-style: normal; padding: 5px 4px; }
.pagebox s { width: 20px; border-left: 1px solid #b9b9b9; background: #f5f5f5; display: flex; align-items: center; justify-content: center; }
.pagebox s::after { content: ""; border: 4px solid transparent; border-top-color: #c5c5c5; border-bottom: 0; }
.ratio { font: bold 9px "DejaVu Sans", sans-serif; letter-spacing: -.7px; fill: #333; }
.tee { font: 12px "Liberation Serif", serif; fill: #222; }
.en { font: bold 9px "DejaVu Sans", sans-serif; fill: #fff; }

.workspace { height: 713px; display: grid; grid-template-columns: 40px 1100px 6px 390px; }
.toolbox { background: linear-gradient(90deg, #f9f9f9, #eee); border-right: 1px solid #b4b4b4; display: flex; flex-direction: column; align-items: center; padding-top: 7px; }
.toolbox .tool { height: 32.120px; }
.toolbox .tool.on { width: 32px; height: 30.120px; margin: 1px 0; background: #dcdcdc; border: 1px solid #b0b0b0; border-radius: 3px; }
.rulers { display: block; }
.tick { stroke: #333; }
.label { font: 11px "DejaVu Sans", sans-serif; fill: #4d4d4d; }
.mark { stroke: #f00; }
.land { stroke: #3a3a3a; stroke-width: 2.200; stroke-linejoin: round; }
.land .n { fill: none; stroke-width: 1.900; }
.land .l { fill: #ff8080; }
.land .m { fill: #ff4040; }
.land .h { fill: #f00; }
.islets { stroke: #444; stroke-width: .8; fill: none; }

.docks { grid-column: 4; display: flex; flex-direction: column; min-height: 0; overflow: hidden; }
.tabs { height: 30px; flex: none; display: flex; align-items: flex-end; border-bottom: 1px solid #fff; box-shadow: inset 0 -1px #b4b4b4; }
.tab { height: 26px; border: 1px solid #b4b4b4; border-left: 0; background: #dcdcdc; display: flex; align-items: center; justify-content: center; border-radius: 3px 3px 0 0; padding: 1px 1px 0 0; }
.tab.on { height: 28px; background: linear-gradient(#fcfcfc, #efefef); border-left: 1px solid #b4b4b4; border-bottom: 0; padding: 1px 2px 0 0; }
.t1 { width: 62px; } .t2 { width: 108px; } .t3 { width: 70px; } .t4 { width: 124px; } .t5 { width: 68px; }
.lower { height: 29px; }
.lower .tab { padding-top: 3px; }
.lower .tab.on { padding-top: 3px; }
.docktitle { flex: none; height: 19px; padding: 0 2px 0 4px; display: flex; justify-content: space-between; align-items: center; }
.docktitle.low { height: 20px; padding-top: 2px; }
.dockbtns { display: flex; gap: 3px; }
.dockbtns i { width: 11px; height: 11px; border: 1px solid #555; border-radius: 2px; }
.dockbtns .float { background: linear-gradient(#666, #666) 4px 1px / 4px 1px, linear-gradient(#666, #666) 7px 1px / 1px 4px, linear-gradient(#666, #666) 4px 1px / 1px 2px, linear-gradient(#666, #666) 1px 3px / 1px 5px, linear-gradient(#666, #666) 5px 3px / 1px 5px, linear-gradient(#666, #666) 1px 3px / 5px 1px, linear-gradient(#666, #666) 1px 7px / 5px 1px; background-repeat: no-repeat; }
.dockbtns .close { background: linear-gradient(45deg, transparent 40%, #444 42% 58%, transparent 60%) center / 7px 7px no-repeat, linear-gradient(-45deg, transparent 40%, #444 42% 58%, transparent 60%) center / 7px 7px no-repeat; }
.tree { flex: none; height: 174px; border: 1px solid #b4b4b4; background: #fff; }
.treehead { height: 21px; background: linear-gradient(#fdfdfd, #ebebeb); border-bottom: 1px solid #b4b4b4; display: flex; }
.col { width: 32px; border-right: 1px solid #cfcfcf; padding-left: 3px; display: flex; align-items: center; }
.col.eye { padding-left: 2px; }
.name { padding: 2px 2px; }
.treerow { display: flex; align-items: center; height: 18px; padding-left: 3px; }
.check { flex: none; width: 14px; height: 14px; border: 1px solid #b9b9b9; background: #fff; margin-right: 18px; }
.check svg { display: block; }
.mini { width: 15px; height: 15px; margin-right: 7px; }
.splitter { height: 5px; flex: none; display: flex; justify-content: center; }
.splitter i { width: 17px; height: 1px; margin-top: 2px; background: repeating-linear-gradient(90deg, #b8b8b8 0 1px, transparent 1px 3px); }
.scroll { flex: none; height: 435px; display: flex; overflow: hidden; }
.form { width: 376px; padding: 9px 12px 0 12px; }
h3 { margin: 4px 0 0; height: 23px; font-size: 13px; line-height: 23px; display: flex; align-items: center; gap: 8px; }
h3.first { margin: 0; }
h3::before { content: ""; width: 12px; height: 8px; margin-left: 1px; background: #3c3c3c; clip-path: polygon(0 0, 100% 0, 50% 100%); }
.box { width: 353px; border: 1px solid #d3d3d3; background: #ebebeb; padding: 0 14px 0 12px; border-radius: 2px; }
.general { height: 52px; padding-bottom: 1px; display: flex; align-items: center; justify-content: space-between; }
.grid { height: 218px; padding-top: 12px; }
.grid label { display: block; height: 18px; }
.row { display: flex; justify-content: space-between; align-items: center; }
.row.spacing { height: 25px; margin: 5px 0 6px; }
.row.offset { height: 56px; margin: 7px 0 6px; }
.row.offset .combo { margin-top: -1px; }
.stack { display: flex; flex-direction: column; gap: 8px; }
.combo, .spin { display: flex; align-items: center; width: 160px; height: 25px; border: 1px solid #b0b0b0; border-radius: 3px; padding-left: 4px; background: linear-gradient(#fdfdfd, #ededed); }
.combo::after { content: ""; margin: 0 7px 0 auto; border: 4px solid transparent; border-top-color: #555; border-bottom: 0; }
.combo.wide { width: 220px; padding-left: 6px; }
.combo .mini { margin-right: 2px; }
.spin { height: 24px; background: #fff; justify-content: space-between; padding-top: 1px; }
.row.spacing .spin { margin-top: 1px; }
.spin.full { width: 326px; margin-top: 6px; }
.spin i { width: 15px; height: 22px; margin-top: -1px; padding-right: 1px; border-left: 1px solid #b9b9b9; background: #f8f8f8; display: flex; flex-direction: column; align-items: center; justify-content: center; gap: 5px; }
.spin i::before { content: ""; border: 4px solid transparent; border-bottom-color: #555; border-top: 0; }
.spin i::after { content: ""; border: 4px solid transparent; border-top-color: #555; border-bottom: 0; }
.spin.zero i::after { border-top-color: #aaa; }
.export { height: 150px; padding-top: 13px; }
.export label { padding-top: 1px; }
.option { display: flex; align-items: center; height: 18px; margin-top: 10px; }
.option + .option { margin-top: 11px; }
.option .check { margin-right: 5px; }
.scrollbar { width: 14px; border-left: 1px solid #b4b4b4; background: #e3e3e3; display: flex; flex-direction: column; }
.scrollbar i { width: 13px; height: 14px; background: #f8f8f8; border-bottom: 1px solid #b4b4b4; display: flex; align-items: center; justify-content: center; padding-right: 1px; }
.scrollbar b { height: 168px; background: #fbfbfb; border-bottom: 1px solid #b4b4b4; }
.scrollbar .up::before { content: ""; border: 4px solid transparent; border-bottom-color: #555; border-top: 0; }
.scrollbar .down { margin-top: auto; border: 0; border-top: 1px solid #b4b4b4; }
.scrollbar .down::before { content: ""; border: 4px solid transparent; border-top-color: #555; border-bottom: 0; }

.status { height: 30px; display: flex; align-items: center; padding-left: 953px; }
.coords { width: 212px; white-space: nowrap; display: flex; gap: 7px; padding-top: 1px; }
.pageno { width: 106px; padding-top: 1px; }
.zoombox { display: flex; width: 135px; height: 25px; border: 1px solid #aaa; border-radius: 3px; background: #fff; }
.zoombox em { flex: 1; font-style: normal; padding: 3px; }
.zoombox s { width: 20px; padding-right: 1px; border-left: 1px solid #b9b9b9; background: #f7f7f7; display: flex; align-items: center; justify-content: center; }
.zoombox s::after { content: ""; border: 4px solid transparent; border-top-color: #555; border-bottom: 0; }
.slider { width: 98px; height: 5px; margin-left: 7px; border: 1px solid #aaa; border-radius: 2px; background: linear-gradient(90deg, #3498db 8px, #d2d2d2 8px); display: flex; align-items: center; }
.slider i { width: 13px; height: 13px; margin-left: 5px; flex: none; border: 1px solid #999; border-radius: 3px; background: #fcfcfc; }
.sizegrip { margin: 14px 0 0 13px; }
```
FILE: rulers.js
```js
const svg = document.getElementById('rulers');
const NS = 'http://www.w3.org/2000/svg';
const add = (parent, tag, attrs, text) => {
  const el = document.createElementNS(NS, tag);
  for (const k in attrs) el.setAttribute(k, attrs[k]);
  if (text !== undefined) el.textContent = text;
  parent.appendChild(el);
};

// Horizontal ruler: one tick every 2 mm, numbered every 20 mm
let d = '';
for (let v = -40; v <= 336; v += 2) {
  const x = Math.floor(185 + v * 2.8605) + 0.5;
  const major = v % 20 === 0 && v > -40;
  const top = major ? 145 : v % 10 === 0 && v > -40 ? 159 : 161;
  d += `M${Math.max(x, 71.5)} ${top}V166`;
  if (major) add(svg, 'text', { class: 'label', x: x + 1.5, y: 157 }, v);
}
// Vertical ruler
for (let v = -14; v <= 224; v += 2) {
  const y = Math.floor(210.3 + v * 2.859) + 0.5;
  const major = v % 20 === 0;
  d += `M${major ? 50 : v % 10 === 0 ? 64 : 66} ${y}H71`;
  if (major) add(svg, 'text', { class: 'label', 'text-anchor': 'end', transform: `translate(62 ${y + 3}) rotate(-90)` }, v < 220 ? v : 20);
}
add(svg, 'path', { class: 'tick', d });
add(svg, 'path', { class: 'mark', d: 'M839.5 145V166M50 588.5H71' });

let seed = 11;
const rnd = () => (seed = seed * 16807 % 2147483647) / 2147483647;

// Break long coast and border segments into short uneven ones
function roughen(src) {
  const tokens = src.match(/[MlhvzHV]|-?\d*\.?\d+/g);
  let out = '', cmd = 'M', x = 0, y = 0, sx = 0, sy = 0, i = 0;
  const lineTo = (nx, ny) => {
    const len = Math.hypot(nx - x, ny - y);
    const n = Math.max(1, Math.round(len / 7));
    for (let k = 1; k < n; k++) {
      const t = k / n;
      out += `L${(x + (nx - x) * t + (rnd() - 0.5) * 3.6).toFixed(1)} ${(y + (ny - y) * t + (rnd() - 0.5) * 3.6).toFixed(1)}`;
    }
    out += `L${nx} ${ny}`;
    x = nx; y = ny;
  };
  while (i < tokens.length) {
    if (/[A-Za-z]/.test(tokens[i])) cmd = tokens[i++];
    if (cmd === 'M') {
      x = sx = +tokens[i++]; y = sy = +tokens[i++];
      out += `M${x} ${y}`;
    } else if (cmd === 'l') {
      const nx = x + +tokens[i++], ny = y + +tokens[i++];
      lineTo(nx, ny);
    } else if (cmd === 'h') lineTo(x + +tokens[i++], y);
    else if (cmd === 'v') lineTo(x, y + +tokens[i++]);
    else if (cmd === 'z') { lineTo(sx, sy); out += 'Z'; }
  }
  return out;
}
for (const p of document.querySelectorAll('.land path')) p.setAttribute('d', roughen(p.getAttribute('d')));

// Clusters of small islets: x, y, half width, half height, count
const clusters = [
  [463, 541, 8, 11, 20], [445, 571, 9, 13, 24], [438, 590, 7, 8, 12], [490, 569, 8, 11, 18],
  [498, 613, 5, 2, 4], [462, 752, 10, 7, 24], [444, 762, 2, 5, 9], [486, 741, 6, 4, 10],
  [508, 722, 9, 5, 14], [519, 705, 11, 7, 18], [478, 716, 6, 5, 8], [455, 728, 8, 2, 5],
  [493, 728, 8, 5, 14], [408, 717, 6, 3, 6], [414, 692, 2, 4, 5], [593, 541, 6, 5, 8],
  [592, 598, 9, 3, 10], [603, 521, 13, 2, 14], [633, 608, 3, 12, 14], [630, 560, 3, 18, 16],
  [638, 576, 5, 3, 6], [575, 480, 8, 3, 10], [505, 538, 6, 5, 8], [518, 525, 4, 12, 6],
  [577, 568, 8, 6, 7], [470, 489, 8, 3, 3], [530, 455, 5, 4, 6],
  [608, 532, 8, 6, 8], [655, 652, 4, 13, 12], [536, 693, 4, 6, 5], [482, 493, 8, 2, 4],
  [457, 426, 2, 6, 5], [588, 502, 5, 3, 4], [627, 742, 3, 2, 4], [550, 466, 4, 3, 4], [543, 555, 14, 3, 8]
];
let dots = '';
for (const [cx, cy, w, h, n] of clusters)
  for (let i = 0; i < n; i++) {
    const x = cx + (rnd() * 2 - 1) * w, y = cy + (rnd() * 2 - 1) * h;
    dots += `M${x.toFixed(1)} ${y.toFixed(1)}l${(rnd() * 2).toFixed(1)} ${(rnd() * 2 - 1).toFixed(1)} ${(rnd() - 1).toFixed(1)} ${(rnd() * 1.5).toFixed(1)}z`;
  }
add(document.getElementById('islets'), 'path', { d: dots });
```
